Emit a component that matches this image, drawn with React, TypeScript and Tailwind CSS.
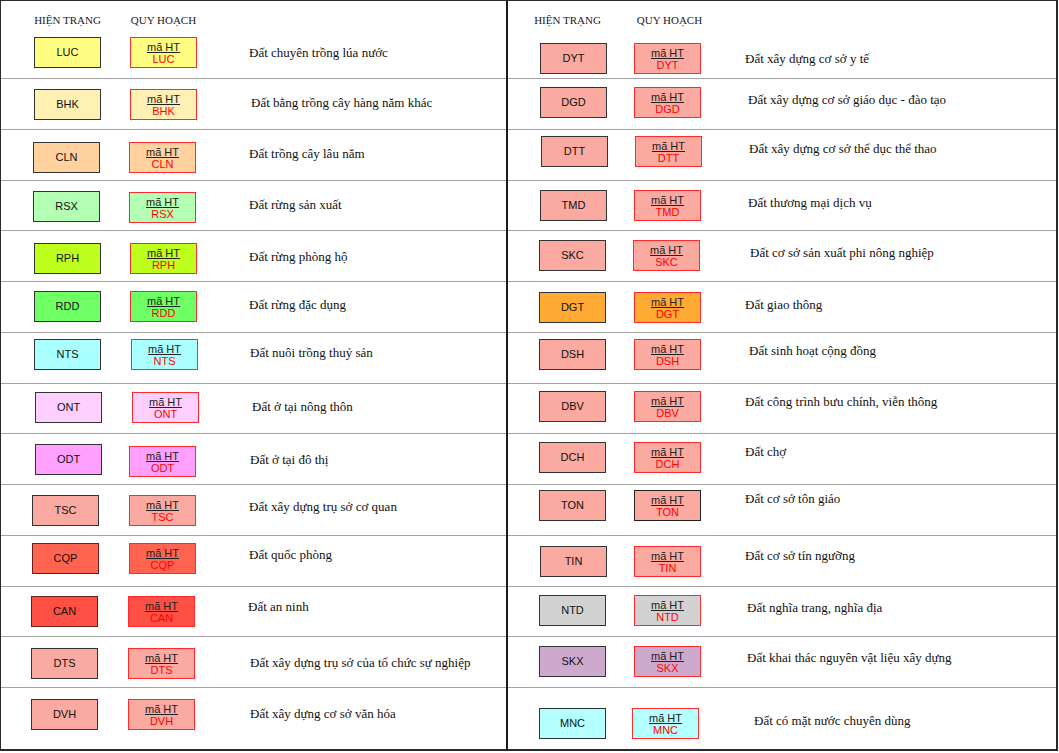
import React from 'react';

type Item = {
  code: string;
  label: string;
  bg: string;
  ht: string; // margin of the "hiện trạng" swatch
  qh: string; // margin of the "quy hoạch" swatch
  tx: string; // margin of the description
  htBorder?: string;
  qhBorder?: string;
};

const ROW_H = [
  'h-[78px]',
  'h-[51px]',
  'h-[51px]',
  'h-[50px]',
  'h-[51px]',
  'h-[51px]',
  'h-[51px]',
  'h-[50px]',
  'h-[51px]',
  'h-[51px]',
  'h-[51px]',
  'h-[50px]',
  'h-[51px]',
  'flex-1',
];

const leftItems: Item[] = [
  { code: 'LUC', label: 'Đất chuyên trồng lúa nước', bg: 'bg-[#fffc82]', ht: 'ml-[33px] mt-[0px]', qh: 'ml-[2px] mt-[0px]', tx: 'ml-[1px] mt-[8px]' },
  { code: 'BHK', label: 'Đất bằng trồng cây hàng năm khác', bg: 'bg-[#fff0b4]', ht: 'ml-[33px] mt-[10px]', qh: 'ml-[2px] mt-[10px]', tx: 'ml-[3px] mt-[16px]' },
  { code: 'CLN', label: 'Đất trồng cây lâu năm', bg: 'bg-[#ffd2a0]', ht: 'ml-[32px] mt-[12px]', qh: 'ml-[1px] mt-[12px]', tx: 'ml-[1px] mt-[16px]' },
  { code: 'RSX', label: 'Đất rừng sản xuất', bg: 'bg-[#b4ffb4]', ht: 'ml-[32px] mt-[10px]', qh: 'ml-[1px] mt-[11px]', tx: 'ml-[1px] mt-[16px]' },
  { code: 'RPH', label: 'Đất rừng phòng hộ', bg: 'bg-[#beff1e]', ht: 'ml-[33px] mt-[12px]', qh: 'ml-[2px] mt-[12px]', tx: 'ml-[1px] mt-[18px]' },
  { code: 'RDD', label: 'Đất rừng đặc dụng', bg: 'bg-[#6eff64]', ht: 'ml-[33px] mt-[9px]', qh: 'ml-[2px] mt-[9px]', tx: 'ml-[1px] mt-[15px]' },
  { code: 'NTS', label: 'Đất nuôi trồng thuỷ sản', bg: 'bg-[#aaffff]', ht: 'ml-[33px] mt-[6px]', qh: 'ml-[3px] mt-[6px]', tx: 'ml-[2px] mt-[12px]' },
  { code: 'ONT', label: 'Đất ở tại nông thôn', bg: 'bg-[#ffd0ff]', ht: 'ml-[34px] mt-[8px]', qh: 'ml-[4px] mt-[8px]', tx: 'ml-[4px] mt-[15px]' },
  { code: 'ODT', label: 'Đất ở tại đô thị', bg: 'bg-[#ffa0ff]', ht: 'ml-[34px] mt-[10px]', qh: 'ml-[1px] mt-[12px]', tx: 'ml-[2px] mt-[18px]' },
  { code: 'TSC', label: 'Đất xây dựng trụ sở cơ quan', bg: 'bg-[#faaaa0]', ht: 'ml-[31px] mt-[10px]', qh: 'ml-[1px] mt-[10px]', tx: 'ml-[1px] mt-[14px]' },
  { code: 'CQP', label: 'Đất quốc phòng', bg: 'bg-[#ff6450]', ht: 'ml-[31px] mt-[7px]', qh: 'ml-[1px] mt-[7px]', tx: 'ml-[1px] mt-[11px]', htBorder: 'border-[#6e1c1c]' },
  { code: 'CAN', label: 'Đất an ninh', bg: 'bg-[#ff5046]', ht: 'ml-[30px] mt-[9px]', qh: 'ml-[0px] mt-[9px]', tx: 'ml-[0px] mt-[12px]', htBorder: 'border-[#6e1c1c]' },
  { code: 'DTS', label: 'Đất xây dựng trụ sở của tổ chức sự nghiệp', bg: 'bg-[#faaaa0]', ht: 'ml-[30px] mt-[11px]', qh: 'ml-[0px] mt-[11px]', tx: 'ml-[2px] mt-[18px]' },
  { code: 'DVH', label: 'Đất xây dựng cơ sở văn hóa', bg: 'bg-[#faaaa0]', ht: 'ml-[30px] mt-[11px]', qh: 'ml-[0px] mt-[11px]', tx: 'ml-[2px] mt-[18px]' },
];

const rightItems: Item[] = [
  { code: 'DYT', label: 'Đất xây dựng cơ sở y tế', bg: 'bg-[#faaaa0]', ht: 'ml-[32px] mt-[6px]', qh: 'ml-[2px] mt-[6px]', tx: 'ml-[0px] mt-[14px]' },
  { code: 'DGD', label: 'Đất xây dựng cơ sở giáo dục - đào tạo', bg: 'bg-[#faaaa0]', ht: 'ml-[32px] mt-[8px]', qh: 'ml-[2px] mt-[8px]', tx: 'ml-[3px] mt-[13px]' },
  { code: 'DTT', label: 'Đất xây dựng cơ sở thể dục thể thao', bg: 'bg-[#faaaa0]', ht: 'ml-[33px] mt-[6px]', qh: 'ml-[3px] mt-[6px]', tx: 'ml-[4px] mt-[11px]' },
  { code: 'TMD', label: 'Đất thương mại dịch vụ', bg: 'bg-[#faaaa0]', ht: 'ml-[32px] mt-[9px]', qh: 'ml-[2px] mt-[9px]', tx: 'ml-[3px] mt-[14px]' },
  { code: 'SKC', label: 'Đất cơ sở sản xuất phi nông nghiệp', bg: 'bg-[#faaaa0]', ht: 'ml-[31px] mt-[9px]', qh: 'ml-[1px] mt-[9px]', tx: 'ml-[5px] mt-[14px]' },
  { code: 'DGT', label: 'Đất giao thông', bg: 'bg-[#ffaa32]', ht: 'ml-[31px] mt-[10px]', qh: 'ml-[2px] mt-[10px]', tx: 'ml-[0px] mt-[15px]' },
  { code: 'DSH', label: 'Đất sinh hoạt cộng đồng', bg: 'bg-[#faaaa0]', ht: 'ml-[31px] mt-[6px]', qh: 'ml-[2px] mt-[6px]', tx: 'ml-[4px] mt-[10px]' },
  { code: 'DBV', label: 'Đất công trình bưu chính, viễn thông', bg: 'bg-[#faaaa0]', ht: 'ml-[31px] mt-[7px]', qh: 'ml-[2px] mt-[7px]', tx: 'ml-[0px] mt-[10px]' },
  { code: 'DCH', label: 'Đất chợ', bg: 'bg-[#faaaa0]', ht: 'ml-[31px] mt-[8px]', qh: 'ml-[2px] mt-[8px]', tx: 'ml-[0px] mt-[10px]' },
  { code: 'TON', label: 'Đất cơ sở tôn giáo', bg: 'bg-[#faaaa0]', ht: 'ml-[31px] mt-[5px]', qh: 'ml-[2px] mt-[5px]', tx: 'ml-[0px] mt-[6px]', qhBorder: 'border-[#222222]' },
  { code: 'TIN', label: 'Đất cơ sở tín ngưỡng', bg: 'bg-[#faaaa0]', ht: 'ml-[32px] mt-[10px]', qh: 'ml-[2px] mt-[10px]', tx: 'ml-[0px] mt-[12px]' },
  { code: 'NTD', label: 'Đất nghĩa trang, nghĩa địa', bg: 'bg-[#d2d2d2]', ht: 'ml-[31px] mt-[8px]', qh: 'ml-[2px] mt-[8px]', tx: 'ml-[2px] mt-[13px]' },
  { code: 'SKX', label: 'Đất khai thác nguyên vật liệu xây dựng', bg: 'bg-[#cdaacd]', ht: 'ml-[31px] mt-[9px]', qh: 'ml-[2px] mt-[9px]', tx: 'ml-[2px] mt-[13px]' },
  { code: 'MNC', label: 'Đất có mặt nước chuyên dùng', bg: 'bg-[#b4ffff]', ht: 'ml-[31px] mt-[20px]', qh: 'ml-[0px] mt-[20px]', tx: 'ml-[9px] mt-[25px]' },
];

const serif = "font-['Liberation_Serif','Times_New_Roman',serif]";
const sans = "font-['Liberation_Sans',Arial,sans-serif]";

function HtBox({ item }: { item: Item }) {
  return (
    <div
      className={`${item.ht} w-[67px] h-[31px] border ${item.htBorder ?? 'border-[#333333]'} ${item.bg} flex items-center justify-center ${sans} text-[11px] text-[#111111]`}
    >
      {item.code}
    </div>
  );
}

function QhBox({ item }: { item: Item }) {
  return (
    <div
      className={`${item.qh} w-[67px] h-[31px] border ${item.qhBorder ?? 'border-[#ff2a2a]'} ${item.bg} flex flex-col items-center justify-center ${sans} text-[11px] leading-[12px]`}
    >
      <span className="text-[#222222] underline underline-offset-[1px]">mã HT</span>
      <span className="text-[#ff0000]">{item.code}</span>
    </div>
  );
}

function Cell({ item, side, index }: { item: Item; side: 'left' | 'right'; index: number }) {
  const cols = side === 'left' ? 'grid-cols-[127px_120px_1fr]' : 'grid-cols-[124px_113px_1fr]';
  const last = index === ROW_H.length - 1;
  return (
    <div className={`${ROW_H[index]} ${last ? '' : 'border-b border-[#a3a3a3]'} flex flex-col`}>
      {index === 0 && (
        <div className={`grid ${cols} h-[36px] pt-[13px] ${serif} text-[11px] leading-[13px] text-[#1a1a1a]`}>
          <div className={`${side === 'left' ? 'ml-[33px]' : 'ml-[26px]'} w-[67px] text-center whitespace-nowrap`}>
            HIỆN TRẠNG
          </div>
          <div className={`${side === 'left' ? 'ml-[2px]' : 'ml-[4px]'} w-[67px] text-center whitespace-nowrap`}>
            QUY HOẠCH
          </div>
          <div />
        </div>
      )}
      <div className={`grid ${cols} items-start`}>
        <HtBox item={item} />
        <QhBox item={item} />
        <div className={`${item.tx} ${serif} text-[13px] leading-[16px] text-[#111111] whitespace-nowrap`}>
          {item.label}
        </div>
      </div>
    </div>
  );
}

export default function App() {
  return (
    <div className="w-[1059px] h-[753px] bg-white">
      <div className="w-[1058px] h-[751px] flex border-t border-l border-r-2 border-b-2 border-[#2a2a2a]">
        {/* Cột trái */}
        <div className="w-[507px] flex flex-col border-r-2 border-[#1a1a1a]">
          {leftItems.map((item, i) => (
            <Cell key={item.code} item={item} side="left" index={i} />
          ))}
        </div>
        {/* Cột phải */}
        <div className="flex-1 flex flex-col">
          {rightItems.map((item, i) => (
            <Cell key={item.code} item={item} side="right" index={i} />
          ))}
        </div>
      </div>
    </div>
  );
}
